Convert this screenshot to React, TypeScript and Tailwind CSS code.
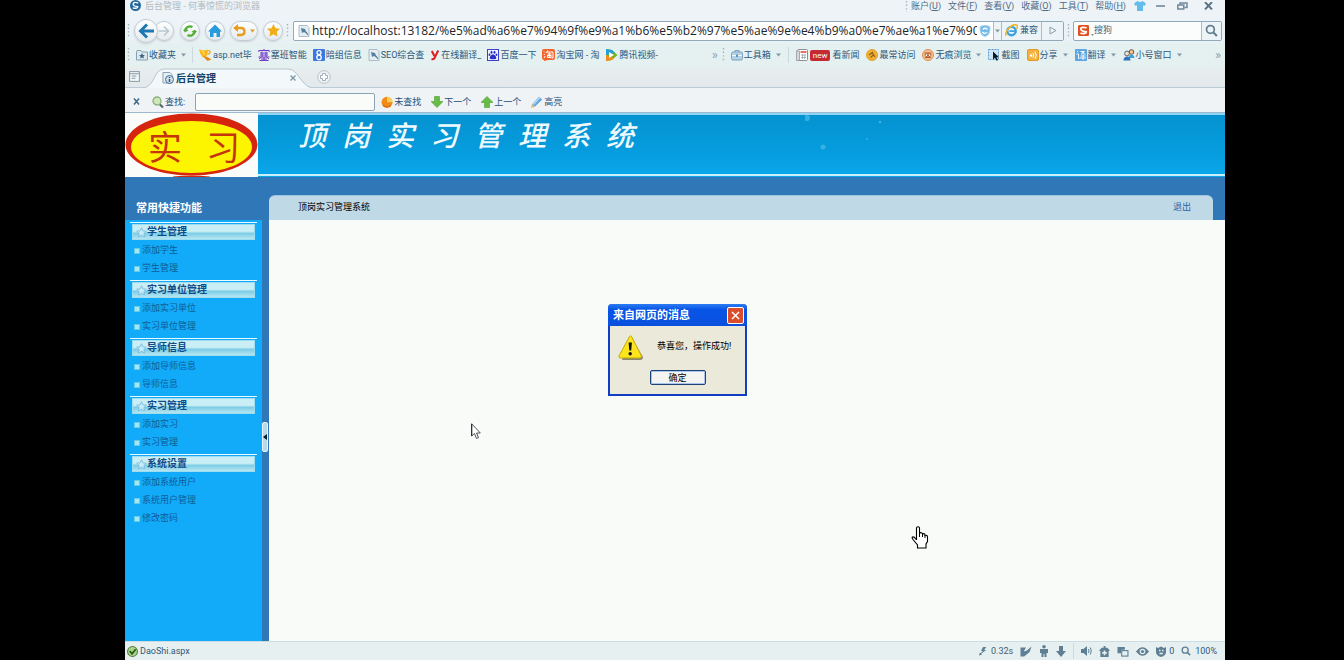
import React from "react";
import type { ReactNode } from "react";

function Svg({ w = 12, h = 12, box = "0 0 12 12", children }: { w?: number; h?: number; box?: string; children: ReactNode }) {
  return (
    <svg width={w} height={h} viewBox={box} className="block shrink-0" aria-hidden="true" fill="none">
      {children}
    </svg>
  );
}

function Dots() {
  return (
    <Svg w={3} h={16} box="0 0 3 16">
      <path d="M1.5 1v14" stroke="#a3b3c0" strokeWidth="1.4" strokeDasharray="1.4 2.2" />
    </Svg>
  );
}

function Caret() {
  return (
    <Svg w={5} h={4} box="0 0 5 4">
      <path d="M0 .5h5L2.5 3.5z" fill="#8397a5" />
    </Svg>
  );
}

function Rule() {
  return <span className="h-4 w-px shrink-0 bg-[#cdd9df]" />;
}

function Magnifier({ color, size = 12 }: { color: string; size?: number }) {
  return (
    <Svg w={size} h={size}>
      <circle cx="5" cy="5" r="3.6" stroke={color} strokeWidth="1.6" />
      <path d="M7.8 7.8l3.2 3.2" stroke={color} strokeWidth="2" />
    </Svg>
  );
}

function PageIcon() {
  return (
    <Svg>
      <path d="M1 .5h8l2 2v9H1z" fill="#e3edf2" stroke="#9db0bd" strokeWidth=".8" />
      <path d="M3 3l4 1 2 5-3-2-2 1z" fill="#55809f" />
      <path d="M8 7l2 3" stroke="#55809f" strokeWidth="1.2" />
    </Svg>
  );
}

type Mark = { label: string; icon: ReactNode; caret?: boolean; rule?: boolean; badge?: string };

const leftMarks: Mark[] = [
  {
    label: "收藏夹",
    caret: true,
    rule: true,
    icon: (
      <Svg>
        <path d="M.5 2.5V11h11V3H6L5 1.5H1z" fill="#dbe7ee" stroke="#7e98aa" strokeWidth=".9" />
        <path d="M6 4l.9 1.9 2 .2-1.5 1.3.5 2L6 8.4l-1.9 1 .5-2L3.1 6.100l2-.2z" fill="#3d6583" />
      </Svg>
    ),
  },
  {
    label: "asp.net毕",
    icon: (
      <Svg w={13} h={12} box="0 0 13 12">
        <path d="M0 .5l5 1 4-1L8.500 5 7 8H3.500L1.500 5z" fill="#f9b618" />
        <path d="M9 1.500c3 0 3 3-.5 4" stroke="#f5a313" strokeWidth="1.200" />
        <path d="M3.500 7l5 1 4 2.500-4 1.500z" fill="#e8891c" />
        <path d="M2 2l2.500.8.5 3.200" stroke="#fde48a" />
      </Svg>
    ),
  },
  {
    label: "塞班智能",
    icon: (
      <Svg>
        <path
          d="M6 0v1.500M.8 3V1.500h10.400V3M2 4h8M2 6h8M.5 8h11M4 2.500V8M8 2.500V8M3.500 8L1 10M8.500 8l2.500 2M6 8v3.500M3 10h6M1.500 11.500h9"
          stroke="#7138c8"
        />
      </Svg>
    ),
  },
  {
    label: "暗组信息",
    icon: (
      <Svg>
        <rect width="12" height="12" rx="1" fill="#3b79e0" />
        <circle cx="6" cy="3.600" r="2" stroke="#fff" strokeWidth="1.300" />
        <circle cx="6" cy="8.400" r="2.200" stroke="#fff" strokeWidth="1.300" />
      </Svg>
    ),
  },
  { label: "SEO综合查", icon: <PageIcon /> },
  {
    label: "在线翻译_",
    icon: (
      <Svg w={10} h={12} box="0 0 11 12">
        <path d="M2 1.500L4.800 7M9 1L5 9.200Q4 11 1.600 10.600" stroke="#dd2222" strokeWidth="2.300" />
      </Svg>
    ),
  },
  {
    label: "百度一下",
    icon: (
      <Svg>
        <rect x=".5" y=".5" width="11" height="11" fill="#f3f5ff" stroke="#3a3fd0" />
        <ellipse cx="4.500" cy="3.300" rx="1" ry="1.500" fill="#2a2fc8" />
        <ellipse cx="7.500" cy="3.300" rx="1" ry="1.500" fill="#2a2fc8" />
        <ellipse cx="2.500" cy="5.800" rx=".9" ry="1.300" fill="#2a2fc8" />
        <ellipse cx="9.500" cy="5.800" rx=".9" ry="1.300" fill="#2a2fc8" />
        <path d="M6 5.200c1.500 0 3.300 2.300 3.300 3.800S7.500 10.300 6 10.300 2.700 10.400 2.700 9 4.500 5.200 6 5.200z" fill="#2a2fc8" />
      </Svg>
    ),
  },
  {
    label: "淘宝网 - 淘",
    icon: (
      <Svg w={13} h={12} box="0 0 13 12">
        <path d="M2 0h9q2 0 2 2v7q0 2-2 2H6l-4 1V11Q0 11 0 9V2Q0 0 2 0z" fill="#f1642b" />
        <path d="M2 2.500l1 1M1.800 5l1 1M2 9l1.200-2M5.500 1.500L4.500 4M5 3h6v6H9.500M5.500 5h4M7.300 3.500V8M5 6.500h4.500M5.500 7v1.500H9V7" stroke="#fff" />
      </Svg>
    ),
  },
  {
    label: "腾讯视频-",
    icon: (
      <Svg w={13} h={12} box="0 0 13 12">
        <path d="M1 0l6 1 5.500 5L7 11 1 12z" fill="#74b71b" />
        <path d="M1 0l6 1 3 3-9 2z" fill="#279ed8" />
        <path d="M1 6v6l6-1 2-2z" fill="#ef8c1c" />
        <path d="M4 3l5 3-5 3z" fill="#fff" />
      </Svg>
    ),
  },
];

const rightMarks: Mark[] = [
  {
    label: "工具箱",
    caret: true,
    rule: true,
    icon: (
      <Svg>
        <path d="M4 3V1.500h4V3" stroke="#7ba3c0" />
        <rect x=".5" y="3" width="11" height="8" rx="1.500" fill="#b4d2e6" stroke="#7ba3c0" />
        <path d="M1 6.500h10" stroke="#eff8fd" />
        <rect x="5" y="5.500" width="2" height="2.500" fill="#6692b2" />
      </Svg>
    ),
  },
  {
    label: "看新闻",
    badge: "new",
    icon: (
      <Svg>
        <rect x="1.500" y=".5" width="10" height="11" rx="1" fill="#fff" stroke="#8d8f92" />
        <rect x=".5" y="2" width="3" height="9.500" fill="#d5d7d9" stroke="#8d8f92" strokeWidth=".7" />
        <path d="M4.500 3h6" stroke="#d9442f" strokeWidth="1.500" />
        <path d="M5 6h5M5 8.500h5M6.500 5v5M8.800 5v5" stroke="#8b9ba5" strokeWidth=".7" />
      </Svg>
    ),
  },
  {
    label: "最常访问",
    icon: (
      <Svg>
        <circle cx="6" cy="6" r="5.500" fill="#f2ae2f" stroke="#e0a030" />
        <path d="M3 6l4-3M4.500 8.500L8 5.500M6 3.500L9 8" stroke="#8c6120" strokeWidth="1.100" />
      </Svg>
    ),
  },
  {
    label: "无痕浏览",
    caret: true,
    icon: (
      <Svg>
        <circle cx="6" cy="6" r="5.500" fill="#f6bd8d" stroke="#e08f55" />
        <path d="M2.500 4h7M3 8.500h6" stroke="#b4602f" />
        <ellipse cx="6" cy="6.200" rx="3" ry="1.700" fill="#fff" stroke="#b4602f" />
        <circle cx="6" cy="6.200" r="1" fill="#a34718" />
      </Svg>
    ),
  },
  {
    label: "截图",
    icon: (
      <Svg>
        <rect x=".5" y=".5" width="10" height="10" fill="#cfe5f7" stroke="#5b9bce" strokeDasharray="2 1" />
        <path d="M5 2.500v8l2-1.700 1.500 3 1.500-.7-1.500-2.800h2.500z" fill="#101820" />
      </Svg>
    ),
  },
  {
    label: "分享",
    caret: true,
    icon: (
      <Svg>
        <rect x=".5" y=".5" width="11" height="11" rx="1.500" fill="#f7b23d" stroke="#e19925" />
        <circle cx="4" cy="6.500" r="1.300" fill="#fff" />
        <path d="M6 4q1.500 2.300 0 4.500M8 2.800q2.500 3.500 0 7" stroke="#fff" />
      </Svg>
    ),
  },
  {
    label: "翻译",
    caret: true,
    icon: (
      <Svg>
        <rect width="12" height="12" rx="1" fill="#5ba6e0" />
        <path d="M2 2l1.200 1M1.500 5h2v5l1.300-1.300M5.500 2.500h4L6 5.500M6.500 3l4 2.500M5.500 7h5M5 9h6M8 5.500V11" stroke="#fff" strokeWidth=".9" />
      </Svg>
    ),
  },
  {
    label: "小号窗口",
    caret: true,
    icon: (
      <Svg>
        <circle cx="8.500" cy="3" r="2.300" fill="#f4c795" stroke="#5b4020" strokeWidth=".9" />
        <path d="M5.500 9c0-4.500 6-4.500 6 0z" fill="#39a3dd" />
        <circle cx="4" cy="4.500" r="2.400" fill="#fbe0bd" stroke="#3d5a75" strokeWidth=".9" />
        <path d="M.5 11.500c0-5.500 7-5.500 7 0z" fill="#2f74b8" />
      </Svg>
    ),
  },
];

function Bookmark({ mark }: { mark: Mark }) {
  return (
    <>
      <a href="#" className="flex shrink-0 items-center gap-px">
        {mark.icon}
        {mark.badge && (
          <span className="mx-px rounded-xs bg-[#c52a31] px-[3px] text-[8px] leading-[11px] text-white">{mark.badge}</span>
        )}
        <span>{mark.label}</span>
        {mark.caret && (
          <span className="ml-1">
            <Caret />
          </span>
        )}
      </a>
      {mark.rule && <Rule />}
    </>
  );
}

function RoundButton({ label, children, size }: { label: string; children: ReactNode; size: string }) {
  return (
    <button
      type="button"
      aria-label={label}
      className={`flex shrink-0 items-center justify-center gap-1 rounded-full border border-[#c2cbd2] bg-linear-to-b from-white to-[#e4eaee] shadow-sm ${size}`}
    >
      {children}
    </button>
  );
}

const menus: [string, string][] = [
  ["账户", "U"],
  ["文件", "F"],
  ["查看", "V"],
  ["收藏", "O"],
  ["工具", "T"],
  ["帮助", "H"],
];

function TitleBar() {
  return (
    <div className="flex h-[18px] items-start justify-between overflow-hidden bg-[#eef3f7] pr-3 pl-[5px]">
      <div className="flex items-center gap-1 text-[9px] leading-[10px] text-[#b4b9bd]">
        <Svg w={11} h={11}>
          <circle cx="6" cy="6" r="6" fill="#23689b" />
          <path d="M9 3.500Q4 1.500 3.500 4.200T8.500 7.200Q8.500 10 3 8.500" stroke="#fff" strokeWidth="1.500" />
        </Svg>
        <span>后台管理 - 何事惊慌的浏览器</span>
      </div>
      <div className="flex items-center gap-2 text-[9px] leading-[10px] text-[#4d6d87]">
        <div className="flex items-center gap-[7px]">
          <span className="-mr-1 h-3 overflow-hidden">
            <Dots />
          </span>
          {menus.map(([name, key]) => (
            <button key={name} type="button" className="shrink-0">
              {name}(<u>{key}</u>)
            </button>
          ))}
        </div>
        <Svg w={12} h={10} box="0 0 12 10">
          <path d="M3.500 0L0 2.500 1.500 5 3 4.200V10h6V4.200L10.500 5 12 2.500 8.500 0Q6 2 3.500 0z" fill="#62bdeb" />
        </Svg>
        <button type="button" aria-label="最小化" className="ml-0.5">
          <Svg w={9} h={3} box="0 0 9 3">
            <path d="M0 1h9" stroke="#71889a" strokeWidth="1.600" />
          </Svg>
        </button>
        <button type="button" aria-label="还原" className="ml-1">
          <Svg w={11} h={8} box="0 0 11 8">
            <path d="M3 3V1h7v4.500H7.500" stroke="#71889a" strokeWidth="1.500" />
            <rect x=".8" y="3" width="6" height="4" stroke="#71889a" strokeWidth="1.500" />
          </Svg>
        </button>
        <button type="button" aria-label="关闭" className="ml-2">
          <Svg w={9} h={8} box="0 0 9 8">
            <path d="M1 0l7 7.500M8 0L1 7.500" stroke="#5b7385" strokeWidth="1.900" />
          </Svg>
        </button>
      </div>
    </div>
  );
}

function NavBar() {
  return (
    <div className="flex h-[25px] items-center bg-linear-to-b from-[#edf4f9] to-[#e8f1f3] pr-[3px] pl-[2px]">
      <Dots />
      <div className="ml-1 flex items-center">
        <RoundButton label="后退" size="z-10 size-6">
          <Svg w={17} h={16} box="0 0 17 16">
            <path d="M9 1.500L2.500 8 9 14.500M3 8h13" stroke="#1d78b3" strokeWidth="3" />
          </Svg>
        </RoundButton>
        <span className="-ml-1">
          <RoundButton label="前进" size="size-5">
            <Svg w={12} h={12}>
              <path d="M6 1.500L10.500 6 6 10.500M10 6H1" stroke="#b9c8d1" strokeWidth="1.700" />
            </Svg>
          </RoundButton>
        </span>
      </div>
      <div className="ml-[6px] flex items-center gap-[5px]">
        <RoundButton label="刷新" size="size-5">
          <Svg w={14} h={14} box="0 0 14 14">
            <path d="M2.500 8A4.700 4.700 0 0 1 9.500 3M11.500 6A4.700 4.700 0 0 1 4.500 11" stroke="#53b033" strokeWidth="2.200" />
            <path d="M0 7h5.500L2.500 3.800zM14 7H8.500l3 3.200z" fill="#53b033" />
          </Svg>
        </RoundButton>
        <RoundButton label="主页" size="size-5">
          <Svg w={14} h={14} box="0 0 14 14">
            <path d="M7 .5L0 7.500h2V13h3.500V9h3v4H12V7.500h2z" fill="#279bdc" />
          </Svg>
        </RoundButton>
        <RoundButton label="撤销" size="h-5 w-7">
          <Svg w={13} h={13} box="0 0 13 13">
            <path d="M2 4h6q3.500 0 3.500 3.500T8 11H4" stroke="#e89c1b" strokeWidth="2.300" />
            <path d="M5 0v8L0 4z" fill="#e89c1b" />
          </Svg>
          <Svg w={5} h={4} box="0 0 5 4">
            <path d="M0 .5h5L2.500 3.500z" fill="#d99a29" />
          </Svg>
        </RoundButton>
        <RoundButton label="收藏" size="size-5">
          <Svg w={13} h={13} box="0 0 13 13">
            <path d="M6.500 0l2 4.300 4.500.5-3.300 3 .9 4.700-4.100-2.300-4.100 2.300.9-4.700L0 4.800l4.500-.5z" fill="#f0ad16" />
          </Svg>
        </RoundButton>
      </div>
      <span className="mr-1 ml-[3px]">
        <Dots />
      </span>
      <div className="flex h-5 min-w-0 flex-1 items-stretch rounded-xs border border-[#92a9b8] bg-white">
        <label htmlFor="address" className="flex items-center pr-0.5 pl-1">
          <PageIcon />
        </label>
        <input
          id="address"
          aria-label="地址"
          readOnly
          className="min-w-0 flex-1 font-['Open_Sans',sans-serif] text-[12px] leading-4 text-[#20252a] outline-none"
          value="http://localhost:13182/%e5%ad%a6%e7%94%9f%e9%a1%b6%e5%b2%97%e5%ae%9e%e4%b9%a0%e7%ae%a1%e7%90%"
        />
        <span className="flex items-center px-0.5">
          <Svg>
            <path d="M6 0l5 1.500v4Q11 9.500 6 12 1 9.500 1 5.500v-4z" fill="#73b9ea" stroke="#b9dcf3" />
            <path d="M8.500 4.500Q6 2 4 4.500M3.500 7Q6 10 8 7" stroke="#fff" strokeWidth="1.300" />
          </Svg>
        </span>
        <button type="button" aria-label="地址列表" className="flex w-2 items-center justify-center border-l border-[#a9bcc8] bg-[#edf4f7]">
          <Caret />
        </button>
        <button type="button" className="flex w-10 items-center justify-center gap-0.5 border-l border-[#a9bcc8] bg-[#edf4f7] text-[9px] text-[#2c587c]">
          <Svg w={13} h={13}>
            <circle cx="6" cy="6.500" r="3.900" stroke="#38a2e2" strokeWidth="2.200" />
            <path d="M4 6.600h5" stroke="#38a2e2" strokeWidth="1.600" />
            <path d="M1 11Q-.5 8 4 3.500T11.500 1.500Q12 3 10.500 4.500" stroke="#f1b62b" strokeWidth="1.500" />
          </Svg>
          兼容
        </button>
        <button type="button" aria-label="转到" className="flex w-[22px] items-center justify-center border-l border-[#a9bcc8] bg-[#edf4f7]">
          <Svg w={8} h={9} box="0 0 8 9">
            <path d="M1 1l6 3.500L1 8z" stroke="#8b9fac" />
          </Svg>
        </button>
      </div>
      <span className="mx-[3px]">
        <Dots />
      </span>
      <div className="flex h-5 w-[149px] shrink-0 items-stretch rounded-xs border border-[#92a9b8] bg-[#fbfcfc]">
        <label htmlFor="search" className="flex items-center gap-0.5 pl-1">
          <Svg w={11} h={11}>
            <rect width="12" height="12" rx="1.500" fill="#e2501f" />
            <path d="M9.500 3Q3 1.500 3 4.200T9 7.500Q9 10.300 2.500 9" stroke="#fff" strokeWidth="1.900" />
          </Svg>
          <Svg w={3} h={11} box="0 0 3 11">
            <path d="M0 9h3L1.500 11z" fill="#7d8d98" />
          </Svg>
        </label>
        <input
          id="search"
          aria-label="搜索"
          placeholder="搜狗"
          className="min-w-0 flex-1 text-[9px] text-[#52606b] outline-none placeholder:text-[#52606b]"
        />
        <button type="button" aria-label="搜索" className="flex w-5 items-center justify-center border-l border-[#a9bcc8] bg-[#edf4f7]">
          <Magnifier color="#64808f" size={13} />
        </button>
      </div>
    </div>
  );
}

function BookmarkBar() {
  return (
    <div className="flex h-6 items-center bg-[#e5f0f0] pr-1 pl-[2px] text-[9px] leading-3 whitespace-nowrap text-[#2c587c]">
      <div className="flex w-[54%] min-w-0 items-center gap-[6px]">
        <Dots />
        <div className="flex min-w-0 flex-1 items-center gap-[6px]">
          {leftMarks.map((m) => (
            <Bookmark key={m.label} mark={m} />
          ))}
        </div>
        <button type="button" aria-label="更多收藏" className="text-[13px] text-[#8ba3b2]">
          »
        </button>
      </div>
      <div className="flex min-w-0 flex-1 items-center gap-[6px] pl-1">
        <Dots />
        <div className="flex min-w-0 flex-1 items-center gap-[7px]">
          {rightMarks.map((m) => (
            <Bookmark key={m.label} mark={m} />
          ))}
        </div>
        <button type="button" aria-label="更多工具" className="text-[13px] text-[#8ba3b2]">
          »
        </button>
      </div>
    </div>
  );
}

function TabBar() {
  return (
    <div className="flex h-[21px] items-end border-b border-[#b9cbd5] bg-linear-to-b from-[#e8eeee] to-[#e3e9ec] pl-1">
      <button type="button" aria-label="侧边栏" className="mb-[5px]">
        <Svg w={11} h={11}>
          <rect x=".7" y=".7" width="10.600" height="10.600" fill="#f1f5f7" stroke="#7f95a3" />
          <path d="M1 3h10M3 5.500h5M3 8h4" stroke="#7f95a3" />
        </Svg>
      </button>
      <div className="relative -mb-px ml-1 flex h-5 w-[168px] items-center pr-4 pl-[18px] text-[10px] font-bold text-[#123f68]">
        <svg className="absolute inset-0 size-full" viewBox="0 0 168 20" preserveAspectRatio="none" aria-hidden="true">
          <path d="M0 20Q5 19 8 14L13 5Q16 1 20 1H144Q149 1 152 5L159 14Q163 19 168 20" fill="#f3f8fa" stroke="#b5c8d3" />
        </svg>
        <span className="relative flex flex-1 items-center gap-0.5">
          <Svg w={12} h={12}>
            <path d="M1 .5h7l2 2V11H1z" fill="#e7eff4" stroke="#8ba3b4" />
            <circle cx="7.500" cy="7.500" r="4" fill="#cfe0ec" stroke="#426e92" />
            <path d="M7.500 5v1M7.500 7v3" stroke="#23527c" strokeWidth="1.400" />
          </Svg>
          后台管理
        </span>
        <button type="button" aria-label="关闭标签页" className="relative">
          <Svg w={6} h={6} box="0 0 6 6">
            <path d="M.5.5l5 5M5.500.5l-5 5" stroke="#7793a6" strokeWidth="1.200" />
          </Svg>
        </button>
      </div>
      <button type="button" aria-label="新建标签页" className="mb-[3px] ml-[5px]">
        <Svg w={14} h={14} box="0 0 14 14">
          <circle cx="7" cy="7" r="6.300" fill="#f1f4f6" stroke="#b7c2ca" />
          <path d="M5.500 3.500h3v2h2v3h-2v2h-3v-2h-2v-3h2z" fill="#fff" stroke="#93a6b3" strokeWidth=".9" />
        </Svg>
      </button>
    </div>
  );
}

function FindButton({ label, children }: { label: string; children: ReactNode }) {
  return (
    <button type="button" className="flex items-center gap-px">
      {children}
      {label}
    </button>
  );
}

function FindBar() {
  return (
    <div className="flex h-[25px] items-center border-b border-[#9db9d0] bg-[#eff3f6] pt-[3px] pl-2 text-[9px] leading-3 text-[#1f4d78]">
      <button type="button" aria-label="关闭查找栏">
        <Svg w={7} h={7} box="0 0 7 7">
          <path d="M1 .5l5 6M6 .5l-5 6" stroke="#3f6a88" strokeWidth="1.500" />
        </Svg>
      </button>
      <label htmlFor="find" className="ml-3 flex items-center gap-px">
        <Svg w={12} h={12}>
          <path d="M7.500 8l3.500 3.500" stroke="#5b6b62" strokeWidth="2.200" />
          <circle cx="5" cy="5" r="4" fill="#cfe8b9" stroke="#8bae7d" strokeWidth="1.300" />
        </Svg>
        查找:
      </label>
      <input id="find" className="ml-2.5 h-[18px] w-[180px] rounded-xs border border-[#8ba3b4] bg-[#fafcfa] px-1 outline-none" />
      <div className="flex items-center gap-[10px] pl-1.5">
        <FindButton label="未查找">
          <Svg>
            <circle cx="6" cy="6.300" r="5.500" fill="#f28a18" />
            <path d="M6 6.300V.8a5.500 5.500 0 0 1 5.500 5.500z" fill="#fbcf55" />
            <path d="M2 9q4 4 8 0" stroke="#d35f0c" />
          </Svg>
        </FindButton>
        <FindButton label="下一个">
          <Svg>
            <path d="M3.500.5h5v5H12L6 11.500 0 5.500h3.500z" fill="#66bd45" stroke="#4b9e33" strokeWidth=".6" />
          </Svg>
        </FindButton>
        <FindButton label="上一个">
          <Svg>
            <path d="M3.500 11.500h5v-5H12L6 .5 0 6.500h3.500z" fill="#66bd45" stroke="#4b9e33" strokeWidth=".6" />
          </Svg>
        </FindButton>
        <FindButton label="高亮">
          <Svg>
            <path d="M1 8.500L8 .8l3.200 2.700-7.400 7.300z" fill="#5ea4dc" />
            <path d="M2.500 8.500L8.800 1.500" stroke="#b8dcf5" strokeWidth="1.300" />
            <path d="M1 8.500L0 12l3.800-1.200z" fill="#e3b169" />
          </Svg>
        </FindButton>
      </div>
    </div>
  );
}

function SiteBanner() {
  return (
    <header className="flex h-16 bg-[#3077b7]">
      <div className="h-16 w-[133px] shrink-0 bg-[#fafcfa]">
        <svg width="133" height="64" viewBox="0 0 133 64" role="img" aria-label="实习" className="block">
          <ellipse cx="66.500" cy="31.500" rx="66" ry="31" fill="#d6250f" />
          <ellipse cx="66.500" cy="34" rx="60.500" ry="26" fill="#fdf500" />
          <path d="M48 63.500q18-2 37 0v.5H48z" fill="#d6250f" />
          <g fill="#c5340b" fontSize="34" fontFamily="'Noto Sans CJK SC', sans-serif" fontWeight="400">
            <text x="23" y="47">实</text>
            <text x="81" y="47">习</text>
          </g>
        </svg>
      </div>
      <div className="relative flex-1 border-t-2 border-[#8fd4f5] bg-linear-to-b from-[#0592d0] via-[#059bdc] to-[#0ba6ea]">
        <h1 className="flex gap-4 pt-0.5 pl-10 text-[28px] leading-10 font-medium text-[#effaff] italic">
          {Array.from("顶岗实习管理系统").map((c) => (
            <span key={c}>{c}</span>
          ))}
        </h1>
        <svg className="absolute top-0 right-[280px]" width="140" height="50" viewBox="0 0 140 50" aria-hidden="true">
          <circle cx="2" cy="3" r="3" fill="#58c2ec" opacity=".6" />
          <circle cx="18" cy="32" r="2.500" fill="#58c2ec" opacity=".6" />
          <circle cx="75" cy="7" r="1" fill="#58c2ec" />
          <circle cx="62" cy="24" r="1" fill="#58c2ec" opacity=".6" />
        </svg>
        <div className="absolute inset-x-0 bottom-px h-0.5 bg-[#c9efff]" />
      </div>
    </header>
  );
}

const groups: { title: string; items: string[] }[] = [
  { title: "学生管理", items: ["添加学生", "学生管理"] },
  { title: "实习单位管理", items: ["添加实习单位", "实习单位管理"] },
  { title: "导师信息", items: ["添加导师信息", "导师信息"] },
  { title: "实习管理", items: ["添加实习", "实习管理"] },
  { title: "系统设置", items: ["添加系统用户", "系统用户管理", "修改密码"] },
];

function Sidebar() {
  return (
    <nav className="flex w-[137px] shrink-0 flex-col gap-[3px] bg-[#11abfa] pt-0.5 pr-[5px] pl-[5px]">
      {groups.map((g) => (
        <section key={g.title}>
          <div className="mb-px h-[18px] border-t border-[#e8fbff] px-0.5 pt-px">
            <h2 className="flex h-4 items-center border border-[#9edcf0] bg-linear-to-b from-[#c9eef5] from-45% via-[#7dcde6] via-60% to-[#b5e6f1] pl-[3px] text-[10px] leading-3 font-bold text-[#114a86]">
              <Svg w={11} h={11}>
                <path d="M6 .8l1.600 3.400 3.700.4-2.700 2.500.7 3.800L6 9.100l-3.300 1.800.7-3.800L.7 4.600l3.700-.4z" fill="#c5ecf8" stroke="#74b9dc" strokeWidth=".9" />
              </Svg>
              {g.title}
            </h2>
          </div>
          <ul>
            {g.items.map((item) => (
              <li key={item} className="flex h-[18px] items-center gap-0.5 pl-1 text-[9px] leading-3 text-[#125b97]">
                <span className="mt-0.5 size-[6px] shrink-0 border border-[#62cbe9] bg-[#a7e6ef]" />
                <a href="#">{item}</a>
              </li>
            ))}
          </ul>
        </section>
      ))}
    </nav>
  );
}

function MessageDialog() {
  return (
    <div
      role="alertdialog"
      aria-labelledby="dialog-title"
      className="absolute top-[84px] left-[339px] w-[139px] rounded-t-[4px] border-2 border-t-0 border-[#123ec4] bg-[#ebe9d9]"
    >
      <div className="-mx-0.5 flex h-[22px] items-center justify-between rounded-t-[4px] bg-linear-to-b from-[#2c7cf3] via-[#0755e6] via-25% to-[#0a50dd] pt-px pr-[3px] pl-[5px]">
        <h2 id="dialog-title" className="text-[11px] leading-4 font-bold text-white">
          来自网页的消息
        </h2>
        <button type="button" aria-label="关闭" className="flex size-[17px] items-center justify-center rounded-xs border border-white bg-[#dc4e2b]">
          <Svg w={9} h={9} box="0 0 9 9">
            <path d="M1 1l7 7M8 1L1 8" stroke="#fff" strokeWidth="1.500" />
          </Svg>
        </button>
      </div>
      <div className="flex h-[42px] items-center gap-[14px] pl-2">
        <Svg w={25} h={25} box="0 0 25 25">
          <path d="M13 2L25 22Q25 25 22 25H4z" fill="#8a8872" />
          <path d="M11.500 1.500q1-1.500 2 0L23.500 21q.5 2-1.500 2H2.500Q.5 23 1 21z" fill="#fce51c" stroke="#c3a70b" />
          <path d="M10.600 7.500h3.300l-.7 8h-1.900z" fill="#111" />
          <circle cx="12.200" cy="18.800" r="1.700" fill="#111" />
        </Svg>
        <p className="pb-0.5 text-[9px] leading-4 whitespace-nowrap text-black">恭喜您，操作成功!</p>
      </div>
      <div className="flex h-[26px] justify-center pt-0.5">
        <button type="button" className="h-[15px] w-14 rounded-xs border border-[#1d4274] bg-[#f4f4f0] text-[9px] leading-3 text-black ring-1 ring-[#a9c4ee] ring-inset">
          确定
        </button>
      </div>
    </div>
  );
}

function Pointers() {
  return (
    <>
      <svg className="absolute top-[203px] left-[202px]" width="10" height="17" viewBox="0 0 10 17" aria-hidden="true">
        <path d="M.7.800V13l2.800-2.500L5.500 15.500l2-.8-2-4.700H9.300z" fill="#fff" stroke="#50555a" />
        <path d="M.7.800V13" stroke="#222" />
      </svg>
      <svg className="absolute top-[306px] left-[642px]" width="18" height="23" viewBox="0 0 18 23" aria-hidden="true">
        <path
          d="M5.500 14V2Q5.500.7 7 .7T8.500 2v5.500Q9 6.500 10.200 6.700T11.500 8q1.200-.7 2.200 0l.3 1.300q2.500-.3 2.500 1.700v4.500L15 18v4H6.500v-3L2 13.500Q.500 11.500 1.500 11T4 12l1.500 2"
          fill="#fff"
          stroke="#000"
          strokeWidth="1.100"
        />
        <path d="M8.500 7v4M11.500 8v3M14 9v3" stroke="#000" />
      </svg>
    </>
  );
}

function StatusBar() {
  const c = "#5f7f95";
  return (
    <footer className="flex h-[19px] shrink-0 items-center justify-between border-t border-[#cbdce3] bg-[#e7f0f0] pr-2 pl-0.5 text-[9px] leading-3 text-[#2c587c]">
      <span className="flex items-center gap-0.5">
        <Svg w={11} h={11}>
          <circle cx="6" cy="6" r="5.400" fill="#a9d58b" stroke="#537c3d" strokeWidth="1.100" />
          <path d="M3 5.500L5.500 8.500 9.500 3.500" stroke="#255b15" strokeWidth="1.900" />
        </Svg>
        DaoShi.aspx
      </span>
      <span className="flex items-center gap-[7px]">
        <span className="flex items-center gap-1 text-[#405f76]">
          <Svg w={8} h={11} box="0 0 10 11">
            <path d="M5 0h4L6.500 3.500H9L3 8l.5 1.500L0 10.500 1 7l1.200.3L5 5H2.500z" fill={c} />
          </Svg>
          0.32s
        </span>
        <Svg w={12} h={11}>
          <path d="M0 1.500h6L3.500 6 7 5l5-4.500-2 6-6 5H0z" fill={c} />
        </Svg>
        <Svg w={10} h={12} box="0 0 10 12">
          <circle cx="5" cy="1.800" r="1.800" fill={c} />
          <path d="M1 4h8v4H7.500V12H5.500V9h-1v3h-2V8H1z" fill={c} />
        </Svg>
        <Svg w={10} h={11} box="0 0 10 11">
          <path d="M3 0h4v5h3l-5 6-5-6h3z" fill={c} />
        </Svg>
        <Rule />
        <Svg w={11} h={10} box="0 0 11 10">
          <path d="M0 3h2.500L6 0v10L2.500 7H0z" fill={c} />
          <path d="M7.500 3q1 2 0 4M9.300 1.500q2 3.500 0 7" stroke={c} />
        </Svg>
        <Svg w={11} h={11}>
          <path d="M0 5l3-3h2V0h2v2h2l3 3-1.500.5V12h-9V5.500z" fill={c} />
          <path d="M6 5v5M3.500 7.500h5" stroke="#e7f0f0" strokeWidth="1.700" />
        </Svg>
        <Svg w={12} h={11}>
          <path d="M0 8V1h8v3H4v4z" fill={c} />
          <rect x="4.600" y="5" width="6.800" height="6" stroke={c} strokeWidth="1.200" />
        </Svg>
        <Svg w={13} h={9} box="0 0 13 9">
          <path d="M0 4.500Q6.500-4 13 4.500 6.500 13 0 4.500z" fill={c} />
          <circle cx="6.500" cy="4.500" r="2.800" fill="#e7f0f0" />
          <circle cx="6.500" cy="4.500" r="1.600" fill={c} />
        </Svg>
        <span className="flex items-center gap-[3px]">
          <Svg w={10} h={11} box="0 0 10 11">
            <path d="M0 1l2 1L5 .5 8 2l2-1v5q0 3.500-5 5-5-1.500-5-5z" fill={c} />
            <path d="M3 4.500h1.500M6 4.500h1.500M3.500 7.500h3.300" stroke="#e7f0f0" strokeWidth="1.300" />
          </Svg>
          0
        </span>
        <span className="flex items-center gap-1">
          <Magnifier color={c} size={10} />
          100%
        </span>
      </span>
    </footer>
  );
}

export default function App() {
  return (
    <div className="flex min-h-screen flex-col bg-black pr-[119px] pl-[125px] font-['Roboto','Noto_Sans_CJK_SC',sans-serif]">
      <TitleBar />
      <NavBar />
      <BookmarkBar />
      <TabBar />
      <FindBar />
      <SiteBanner />
      <div className="flex h-[43px] shrink-0 bg-[#3077b7] pr-3">
        <div className="flex w-36 shrink-0 items-end pb-0.5 pl-[11px] text-[11px] leading-[18px] font-bold text-white">常用快捷功能</div>
        <div className="mt-[18px] flex flex-1 items-center justify-between rounded-t-md border-t border-[#9ec3e3] bg-[#c0d9e7] pr-[22px] pb-0.5 pl-[29px] text-[9px] leading-3 text-black">
          <span>顶岗实习管理系统</span>
          <a href="#" className="text-[#2765a3]">
            退出
          </a>
        </div>
      </div>
      <div className="flex flex-1">
        <Sidebar />
        <div className="flex w-[7px] shrink-0 items-center bg-[#3077b7] pt-3">
          <button type="button" aria-label="收起菜单" className="flex h-[30px] w-[6px] items-center justify-center rounded-xs border border-[#e6f2f8] bg-[#b9d9ea]">
            <Svg w={4} h={6} box="0 0 4 6">
              <path d="M4 0v6L0 3z" fill="#0a1a28" />
            </Svg>
          </button>
        </div>
        <main className="relative flex-1 bg-[#f9fbf8]">
          <MessageDialog />
          <Pointers />
        </main>
      </div>
      <StatusBar />
    </div>
  );
}
